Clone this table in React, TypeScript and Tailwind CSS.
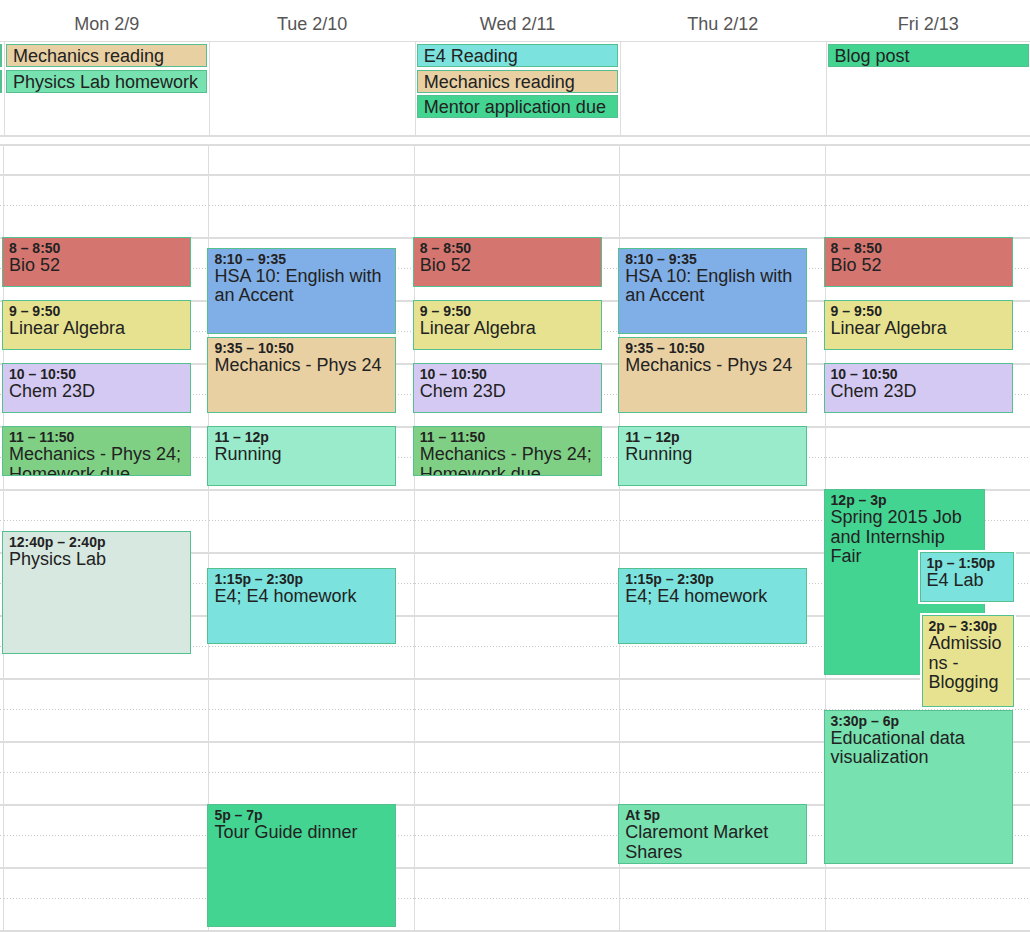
import clsx from "clsx";

type CalEvent = {
  start: number;
  end: number;
  time: string;
  title: string;
  bg: string;
  left?: number;
  width?: number;
  ring?: boolean;
};

type AllDay = { title: string; bg: string };

const m = (h: number, min = 0) => h * 60 + min;

const RED = "bg-[#d4766f]";
const YELLOW = "bg-[#e6e290]";
const LAVENDER = "bg-[#d4c9f2]";
const LEAF = "bg-[#7fd084]";
const BLUE = "bg-[#80aee6]";
const TAN = "bg-[#e8d0a2]";
const MINT = "bg-[#99ebcb]";
const SAGE = "bg-[#d7e8e0]";
const CYAN = "bg-[#7be2dd]";
const GREEN = "bg-[#44d492]";
const LIGHTGREEN = "bg-[#77e1b0]";

const days: { label: string; allDay: AllDay[]; events: CalEvent[] }[] = [
  {
    label: "Mon 2/9",
    allDay: [
      { title: "Mechanics reading", bg: TAN },
      { title: "Physics Lab homework", bg: LIGHTGREEN },
    ],
    events: [
      { start: m(8), end: m(8, 50), time: "8 – 8:50", title: "Bio 52", bg: RED },
      { start: m(9), end: m(9, 50), time: "9 – 9:50", title: "Linear Algebra", bg: YELLOW },
      { start: m(10), end: m(10, 50), time: "10 – 10:50", title: "Chem 23D", bg: LAVENDER },
      { start: m(11), end: m(11, 50), time: "11 – 11:50", title: "Mechanics - Phys 24; Homework due", bg: LEAF },
      { start: m(12, 40), end: m(14, 40), time: "12:40p – 2:40p", title: "Physics Lab", bg: SAGE },
    ],
  },
  {
    label: "Tue 2/10",
    allDay: [],
    events: [
      { start: m(8, 10), end: m(9, 35), time: "8:10 – 9:35", title: "HSA 10: English with an Accent", bg: BLUE },
      { start: m(9, 35), end: m(10, 50), time: "9:35 – 10:50", title: "Mechanics - Phys 24", bg: TAN },
      { start: m(11), end: m(12), time: "11 – 12p", title: "Running", bg: MINT },
      { start: m(13, 15), end: m(14, 30), time: "1:15p – 2:30p", title: "E4; E4 homework", bg: CYAN },
      { start: m(17), end: m(19), time: "5p – 7p", title: "Tour Guide dinner", bg: GREEN },
    ],
  },
  {
    label: "Wed 2/11",
    allDay: [
      { title: "E4 Reading", bg: CYAN },
      { title: "Mechanics reading", bg: TAN },
      { title: "Mentor application due", bg: GREEN },
    ],
    events: [
      { start: m(8), end: m(8, 50), time: "8 – 8:50", title: "Bio 52", bg: RED },
      { start: m(9), end: m(9, 50), time: "9 – 9:50", title: "Linear Algebra", bg: YELLOW },
      { start: m(10), end: m(10, 50), time: "10 – 10:50", title: "Chem 23D", bg: LAVENDER },
      { start: m(11), end: m(11, 50), time: "11 – 11:50", title: "Mechanics - Phys 24; Homework due", bg: LEAF },
    ],
  },
  {
    label: "Thu 2/12",
    allDay: [],
    events: [
      { start: m(8, 10), end: m(9, 35), time: "8:10 – 9:35", title: "HSA 10: English with an Accent", bg: BLUE },
      { start: m(9, 35), end: m(10, 50), time: "9:35 – 10:50", title: "Mechanics - Phys 24", bg: TAN },
      { start: m(11), end: m(12), time: "11 – 12p", title: "Running", bg: MINT },
      { start: m(13, 15), end: m(14, 30), time: "1:15p – 2:30p", title: "E4; E4 homework", bg: CYAN },
      { start: m(17), end: m(18), time: "At 5p", title: "Claremont Market Shares", bg: LIGHTGREEN },
    ],
  },
  {
    label: "Fri 2/13",
    allDay: [{ title: "Blog post", bg: GREEN }],
    events: [
      { start: m(8), end: m(8, 50), time: "8 – 8:50", title: "Bio 52", bg: RED },
      { start: m(9), end: m(9, 50), time: "9 – 9:50", title: "Linear Algebra", bg: YELLOW },
      { start: m(10), end: m(10, 50), time: "10 – 10:50", title: "Chem 23D", bg: LAVENDER },
      { start: m(12), end: m(15), time: "12p – 3p", title: "Spring 2015 Job and Internship Fair", bg: GREEN, width: 161 },
      { start: m(13), end: m(13, 50), time: "1p – 1:50p", title: "E4 Lab", bg: CYAN, left: 94, width: 94, ring: true },
      { start: m(14), end: m(15, 30), time: "2p – 3:30p", title: "Admissions - Blogging", bg: YELLOW, left: 96, width: 92, ring: true },
      { start: m(15, 30), end: m(18), time: "3:30p – 6p", title: "Educational data visualization", bg: LIGHTGREEN },
    ],
  },
];

// visible hours in the scrolled body: 7a .. 7p
const hours = Array.from({ length: 13 }, (_, i) => i);

function HourRows() {
  return (
    <div className="flex flex-col">
      <div className="h-[28px]" />
      {hours.map((h) => (
        <div key={h} className="flex h-[63px] flex-col border-t-2 border-[#dddddd]">
          <div className="h-[29px]" />
          <div className="h-px bg-[linear-gradient(to_right,#c8c8c8_1px,transparent_1px)] bg-[length:3px_1px]" />
        </div>
      ))}
    </div>
  );
}

function EventBox({ ev }: { ev: CalEvent }) {
  const top = 28 + (ev.start - 420) * 1.05;
  const height = (ev.end - ev.start) * 1.05 - 3;
  return (
    <div
      className={clsx(
        "absolute overflow-hidden border border-[#54c08f] pt-[2px] pl-[6px] pr-[7px] text-[#222]",
        ev.bg,
        ev.ring && "ring-2 ring-white"
      )}
      style={{ top, height, left: ev.left ?? -2, width: ev.width ?? 189 }}
    >
      <div className="text-[14px] font-bold leading-[16px]">{ev.time}</div>
      <div className="break-words text-[18px] leading-[19.5px]">{ev.title}</div>
    </div>
  );
}

export default function App() {
  return (
    <div className="h-[932px] w-[1030px] overflow-hidden bg-white font-['Liberation_Sans',Arial,sans-serif]">
      {/* day headers */}
      <div className="flex h-[42px] border-b border-[#dddddd]">
        <div className="w-[4px] shrink-0" />
        {days.map((d) => (
          <div key={d.label} className="w-[205.4px] shrink-0 pt-[14px] text-center text-[18px] leading-[21px] text-[#555]">
            {d.label}
          </div>
        ))}
      </div>

      {/* all-day events */}
      <div className="flex h-[95px] border-b-2 border-[#dddddd]">
        <div className="flex w-[4px] shrink-0 flex-col gap-[3px] pt-[2px]">
          <div className="h-[23px] w-[2px] bg-[#54c08f]" />
          <div className="h-[23px] w-[2px] bg-[#54c08f]" />
        </div>
        {days.map((d) => (
          <div key={d.label} className="flex w-[205.4px] shrink-0 flex-col gap-[2.5px] border-l border-[#dddddd] pt-[2px] pl-px pr-[2px]">
            {d.allDay.map((a) => (
              <div key={a.title} className={clsx("h-[23px] border border-[#54c08f] pt-px pl-[6px] text-[18px] leading-[21px] text-[#222]", a.bg)}>
                {a.title}
              </div>
            ))}
          </div>
        ))}
      </div>

      {/* timed grid */}
      <div className="mt-[7px] flex border-t-2 border-[#dddddd]">
        <div className="w-[3px] shrink-0">
          <HourRows />
        </div>
        {days.map((d) => (
          <div key={d.label} className="relative w-[205.4px] shrink-0 border-l border-[#dddddd]">
            <HourRows />
            {d.events.map((ev) => (
              <EventBox key={ev.time + ev.title} ev={ev} />
            ))}
          </div>
        ))}
      </div>
    </div>
  );
}
